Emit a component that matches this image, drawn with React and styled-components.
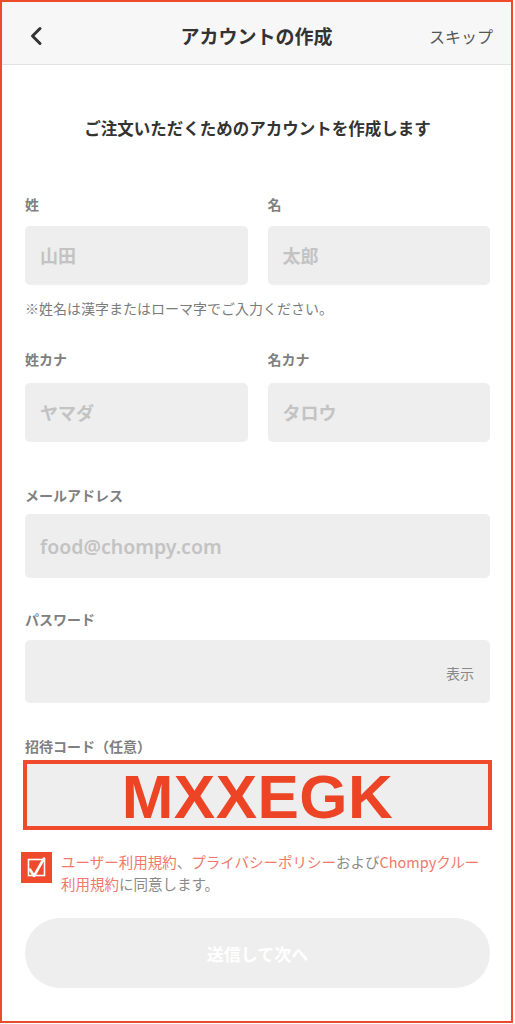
import React from 'react'
import styled, { createGlobalStyle } from 'styled-components'

const GlobalStyle = createGlobalStyle`
  body {
    margin: 0;
    background: #ffffff;
    font-family: "Noto Sans CJK JP", "Noto Sans", sans-serif;
  }
`

const Screen = styled.div`
  width: 513px;
  height: 1023px;
  box-sizing: border-box;
  border: 2px solid #ef4a2c;
  background: #ffffff;
  overflow: hidden;
`

const Header = styled.header`
  height: 63px;
  box-sizing: border-box;
  padding-top: 5px;
  background: #f7f7f7;
  border-bottom: 1px solid #e1e1e1;
  display: grid;
  grid-template-columns: 90px 1fr 90px;
  align-items: center;
`

const BackButton = styled.button`
  justify-self: start;
  margin-left: 26px;
  padding: 0;
  border: 0;
  background: none;
  display: flex;
  align-items: center;
`

const Title = styled.h1`
  margin: 0;
  text-align: center;
  font-size: 19px;
  font-weight: 700;
  color: #333333;
`

const Skip = styled.span`
  justify-self: end;
  margin-right: 18px;
  font-size: 16px;
  color: #555555;
`

const Body = styled.main`
  padding: 0 21px 0 23px;
`

const Lead = styled.p`
  margin: 51px 0 0;
  text-align: center;
  font-size: 16.5px;
  line-height: 24px;
  font-weight: 700;
  color: #333333;
`

const Row = styled.div`
  display: grid;
  grid-template-columns: 1fr 1fr;
  gap: 20px;
  margin-top: ${p => p.$top}px;
`

const Field = styled.div`
  display: flex;
  flex-direction: column;
  margin-top: ${p => p.$top || 0}px;
`

const Label = styled.label`
  font-size: 14px;
  line-height: 20px;
  font-weight: 700;
  color: #808080;
  margin-bottom: ${p => p.$gap}px;
`

const Input = styled.input`
  display: block;
  width: 100%;
  box-sizing: border-box;
  height: ${p => p.$h}px;
  border: 0;
  border-radius: 5px;
  background: #eeeeee;
  padding: 0 15px;
  font-family: "Noto Sans", "Noto Sans CJK JP", sans-serif;
  font-size: ${p => p.$size || 18}px;
  font-weight: 600;
  color: #333333;
  outline: none;

  &::placeholder {
    color: #c3c3c3;
  }
`

const Note = styled.p`
  margin: 13px 0 0;
  font-size: 14px;
  line-height: 20px;
  color: #7b7b7b;
`

const PasswordBox = styled.div`
  height: 63px;
  border-radius: 5px;
  background: #eeeeee;
  display: flex;
  align-items: center;
  padding-right: 16px;
`

const PasswordInput = styled(Input)`
  flex: 1;
  height: 100%;
  background: transparent;
`

const Reveal = styled.span`
  font-size: 14px;
  color: #888888;
  padding-top: 2px;
`

const CodeBox = styled.div`
  height: 70px;
  box-sizing: border-box;
  margin-left: -2px;
  margin-right: -2px;
  border: 4px solid #ee4a2b;
  background: #eeeeee;
  display: flex;
  align-items: center;
  justify-content: center;
`

const Code = styled.span`
  font-family: "Liberation Sans", Arial, sans-serif;
  font-size: 62px;
  line-height: 1;
  font-weight: 700;
  color: #ee4426;
  padding-top: 4px;
  letter-spacing: 0.5px;
`

const Agree = styled.div`
  display: flex;
  gap: 9px;
  margin: 21px 0 0 -4px;
`

const Check = styled.span`
  flex: none;
  display: flex;
  margin-top: 1px;
`

const Terms = styled.p`
  margin: 0;
  font-size: 14.5px;
  line-height: 22px;
  color: #8a8a8a;
`

const TermLink = styled.span`
  color: #f2786a;
`

const Submit = styled.button`
  display: block;
  width: 100%;
  height: 70px;
  margin-top: 23px;
  border: 0;
  border-radius: 35px;
  background: #eeeeee;
  color: #ffffff;
  font-family: "Noto Sans CJK JP", sans-serif;
  font-size: 17px;
  font-weight: 700;
`

const CheckIcon = () => (
  <svg width="31" height="31" viewBox="0 0 31 31">
    <rect width="31" height="31" fill="#ee4a2b" />
    <rect x="7.5" y="7.5" width="16" height="16" fill="none" stroke="#ffffff" strokeWidth="1.6" />
    <path d="M9 17.5 L13 24 L23 6.5" fill="none" stroke="#ffffff" strokeWidth="2.6" strokeLinecap="round" strokeLinejoin="round" />
  </svg>
)

export default function App () {
  return (
    <>
      <GlobalStyle />
      <Screen>
        <Header>
          <BackButton aria-label="戻る">
            <svg width="16" height="20" viewBox="0 0 16 20">
              <polyline points="12,2.5 4.5,10 12,17.5" fill="none" stroke="#333333" strokeWidth="3" strokeLinecap="round" strokeLinejoin="round" />
            </svg>
          </BackButton>
          <Title>アカウントの作成</Title>
          <Skip>スキップ</Skip>
        </Header>

        <Body>
          <Lead>ご注文いただくためのアカウントを作成します</Lead>

          <Row $top={54}>
            <Field>
              <Label $gap={12}>姓</Label>
              <Input $h={59} placeholder="山田" />
            </Field>
            <Field>
              <Label $gap={12}>名</Label>
              <Input $h={59} placeholder="太郎" />
            </Field>
          </Row>
          <Note>※姓名は漢字またはローマ字でご入力ください。</Note>

          <Row $top={31}>
            <Field>
              <Label $gap={14}>姓カナ</Label>
              <Input $h={59} placeholder="ヤマダ" />
            </Field>
            <Field>
              <Label $gap={14}>名カナ</Label>
              <Input $h={59} placeholder="タロウ" />
            </Field>
          </Row>

          <Field $top={43}>
            <Label $gap={9}>メールアドレス</Label>
            <Input $h={64} $size={19.5} placeholder="food@chompy.com" />
          </Field>

          <Field $top={31}>
            <Label $gap={11}>パスワード</Label>
            <PasswordBox>
              <PasswordInput type="password" />
              <Reveal>表示</Reveal>
            </PasswordBox>
          </Field>

          <Field $top={33}>
            <Label $gap={4}>招待コード（任意）</Label>
            <CodeBox>
              <Code>MXXEGK</Code>
            </CodeBox>
          </Field>

          <Agree>
            <Check><CheckIcon /></Check>
            <Terms>
              <TermLink>ユーザー利用規約</TermLink>、<TermLink>プライバシーポリシー</TermLink>および<TermLink>Chompyクルー<br />利用規約</TermLink>に同意します。
            </Terms>
          </Agree>

          <Submit>送信して次へ</Submit>
        </Body>
      </Screen>
    </>
  )
}
